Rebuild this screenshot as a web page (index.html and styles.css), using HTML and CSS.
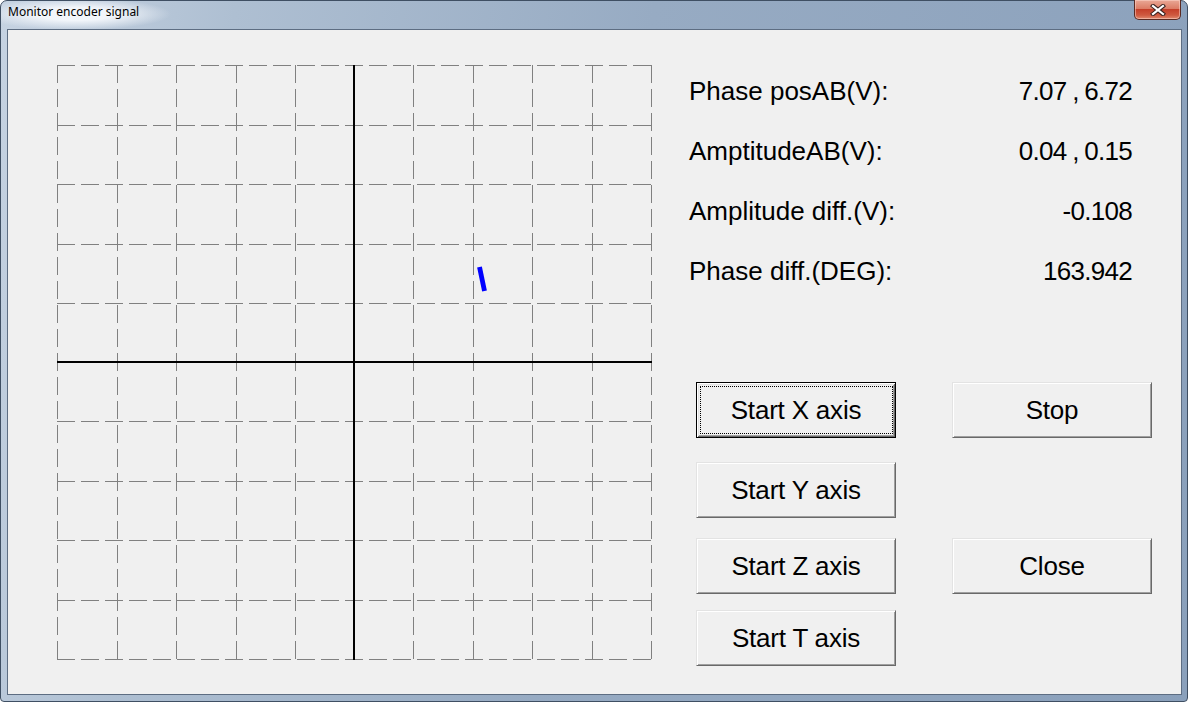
FILE: index.html
```html
<!DOCTYPE html>
<html>
<head>
<meta charset="utf-8">
<link rel="stylesheet" href="styles.css">
</head>
<body>
<div class="window">
  <div class="titlebar">
    <span class="title">Monitor encoder signal</span>
    <div class="close-btn">
      <svg width="16" height="12" viewBox="0 0 16 12">
        <path d="M3 2 L13 10 M13 2 L3 10" stroke="#3a2320" stroke-width="4.2" stroke-linecap="square"/>
        <path d="M3 2 L13 10 M13 2 L3 10" stroke="#ffffff" stroke-width="2.2" stroke-linecap="square"/>
      </svg>
    </div>
  </div>
  <div class="client">
    <div class="plot">
      <svg width="596" height="596" viewBox="0 0 596 596">
        <g stroke="#808080" stroke-width="1" stroke-dasharray="18 6" fill="none">
          <line x1="0.5" y1="0" x2="0.5" y2="596"/>
          <line x1="60.5" y1="0" x2="60.5" y2="596"/>
          <line x1="119.5" y1="0" x2="119.5" y2="596"/>
          <line x1="179.5" y1="0" x2="179.5" y2="596"/>
          <line x1="238.5" y1="0" x2="238.5" y2="596"/>
          <line x1="356.5" y1="0" x2="356.5" y2="596"/>
          <line x1="416.5" y1="0" x2="416.5" y2="596"/>
          <line x1="475.5" y1="0" x2="475.5" y2="596"/>
          <line x1="535.5" y1="0" x2="535.5" y2="596"/>
          <line x1="594.5" y1="0" x2="594.5" y2="596"/>
          <line y1="0.5" x1="0" y2="0.5" x2="596"/>
          <line y1="60.5" x1="0" y2="60.5" x2="596"/>
          <line y1="119.5" x1="0" y2="119.5" x2="596"/>
          <line y1="179.5" x1="0" y2="179.5" x2="596"/>
          <line y1="238.5" x1="0" y2="238.5" x2="596"/>
          <line y1="356.5" x1="0" y2="356.5" x2="596"/>
          <line y1="416.5" x1="0" y2="416.5" x2="596"/>
          <line y1="475.5" x1="0" y2="475.5" x2="596"/>
          <line y1="535.5" x1="0" y2="535.5" x2="596"/>
          <line y1="594.5" x1="0" y2="594.5" x2="596"/>
        </g>
        <g stroke="#000000" stroke-width="2">
          <line x1="297" y1="0" x2="297" y2="595"/>
          <line x1="0" y1="297" x2="595" y2="297"/>
        </g>
        <line x1="422.5" y1="202" x2="427.5" y2="226" stroke="#0000ff" stroke-width="4.8"/>
      </svg>
    </div>
    <div class="panel">
      <div class="readings">
        <div class="row"><span class="label">Phase posAB(V):</span><span class="value">7.07 , 6.72</span></div>
        <div class="row"><span class="label">AmptitudeAB(V):</span><span class="value">0.04 , 0.15</span></div>
        <div class="row"><span class="label">Amplitude diff.(V):</span><span class="value">-0.108</span></div>
        <div class="row"><span class="label">Phase diff.(DEG):</span><span class="value">163.942</span></div>
      </div>
      <div class="buttons">
        <button class="btn default r1 c1">Start X axis</button>
        <button class="btn r1 c2">Stop</button>
        <button class="btn r2 c1">Start Y axis</button>
        <button class="btn r3 c1">Start Z axis</button>
        <button class="btn r3 c2">Close</button>
        <button class="btn r4 c1">Start T axis</button>
      </div>
    </div>
  </div>
</div>
</body>
</html>
```
FILE: styles.css
```css
html, body {
  margin: 0;
  padding: 0;
  background: #ffffff;
}
body {
  width: 1188px;
  height: 702px;
  overflow: hidden;
}
.window {
  width: 1188px;
  height: 702px;
  box-sizing: border-box;
  border: 1px solid #3f4f63;
  border-radius: 7px 7px 4px 4px;
  background: linear-gradient(100deg, #c6d3e2 0%, #aebfd2 18%, #97abc3 50%, #8aa0bb 100%);
  display: flex;
  flex-direction: column;
}
.titlebar {
  height: 28px;
  display: flex;
  align-items: flex-start;
  background: radial-gradient(ellipse 95px 16px at 75px 13px, rgba(245,248,252,0.95) 40%, rgba(245,248,252,0) 100%);
  border-radius: 6px 6px 0 0;
}
.title {
  font-family: "Noto Sans", "Liberation Sans", sans-serif;
  font-size: 12px;
  color: #000;
  margin-left: 7px;
  margin-top: 3px;
  line-height: 16px;
}
.close-btn {
  margin-left: auto;
  margin-right: 6px;
  margin-top: -1px;
  width: 47px;
  height: 20px;
  box-sizing: border-box;
  border: 1px solid #5a2a22;
  border-top: none;
  border-radius: 0 0 5px 5px;
  background: linear-gradient(to bottom, #e9a896 0%, #dc7d66 45%, #c5402a 50%, #cf5a40 80%, #e08a6f 100%);
  display: flex;
  align-items: center;
  justify-content: center;
  box-shadow: inset 0 0 0 1px rgba(255,220,210,0.5);
}
.close-btn svg {
  display: block;
}
.client {
  flex: 1;
  margin: 0 5px 6px 6px;
  border: 1px solid #5d6d82;
  background: #f0f0f0;
  display: flex;
}
.plot {
  padding: 35px 0 0 49px;
}
.plot svg {
  display: block;
}
.panel {
  margin-left: 36px;
  width: 443px;
  padding-top: 31px;
  font-family: "Liberation Sans", Arial, sans-serif;
  font-size: 26px;
  color: #000;
}
.row {
  height: 60px;
  line-height: 60px;
  display: flex;
  justify-content: space-between;
  white-space: nowrap;
}
.value {
  word-spacing: -1px;
  letter-spacing: -0.7px;
}
.buttons {
  margin-top: 81px;
  margin-left: 7px;
  display: grid;
  grid-template-columns: 200px 200px;
  grid-template-rows: 56px 24px 56px 20px 56px 16px 56px;
  column-gap: 56px;
}
.r1 { grid-row: 1; }
.r2 { grid-row: 3; }
.r3 { grid-row: 5; }
.r4 { grid-row: 7; }
.c1 { grid-column: 1; }
.c2 { grid-column: 2; }
.btn {
  position: relative;
  width: 200px;
  height: 56px;
  box-sizing: border-box;
  margin: 0;
  padding: 0;
  background: #f0f0f0;
  font-family: "Liberation Sans", Arial, sans-serif;
  font-size: 26px;
  letter-spacing: -0.2px;
  color: #000;
  border-style: solid;
  border-width: 1px;
  border-color: #e3e3e3 #696969 #696969 #e3e3e3;
  box-shadow: inset 1px 1px #ffffff, inset -1px -1px #a0a0a0;
  border-radius: 0;
}
.btn.default {
  border-color: #000;
  box-shadow: inset 1px 1px #ffffff, inset -1px -1px #696969, inset 2px 2px #e3e3e3, inset -2px -2px #a0a0a0;
}
.btn.default::after {
  content: "";
  position: absolute;
  left: 3px;
  top: 3px;
  right: 2px;
  bottom: 3px;
  border: 1px dotted #000;
}
```
